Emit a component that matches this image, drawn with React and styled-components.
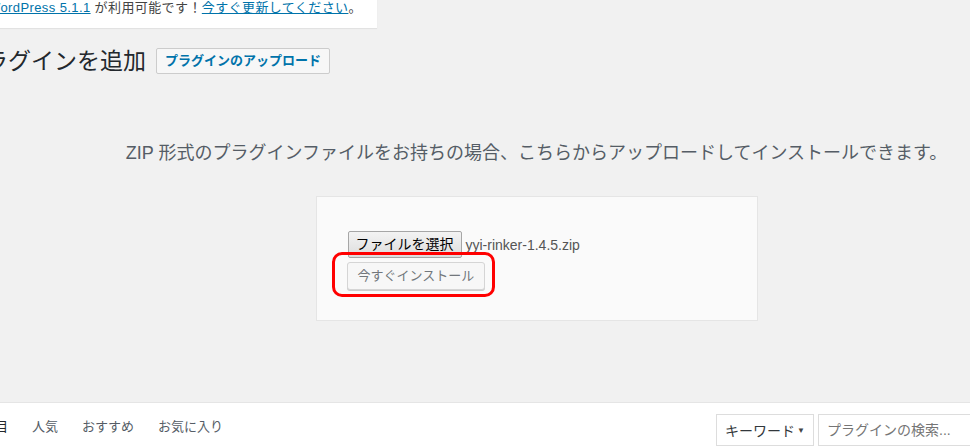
import React from "react";
import styled, { createGlobalStyle } from "styled-components";

const GlobalStyle = createGlobalStyle`
  html, body {
    margin: 0;
    padding: 0;
    background: #f1f1f1;
    overflow: hidden;
  }
  body {
    font-family: "Liberation Sans", "Noto Sans CJK JP", sans-serif;
    color: #444;
  }
`;

const tabs = ["注目", "人気", "おすすめ", "お気に入り"];

const App = () => {
  return (
    <>
      <GlobalStyle />
      <Wrap>
        <Notice>
          <a href="#wp">WordPress 5.1.1</a> が利用可能です！
          <a href="#update">今すぐ更新してください</a>。
        </Notice>

        <TitleRow>
          <Title>プラグインを追加</Title>
          <TitleAction>プラグインのアップロード</TitleAction>
        </TitleRow>

        <UploadSection>
          <Help>
            ZIP 形式のプラグインファイルをお持ちの場合、こちらからアップロードしてインストールできます。
          </Help>
          <UploadForm>
            <FileRow>
              <FileButton>ファイルを選択</FileButton>
              <FileName>yyi-rinker-1.4.5.zip</FileName>
            </FileRow>
            <InstallWrap>
              <InstallButton disabled>今すぐインストール</InstallButton>
              <Highlight />
            </InstallWrap>
          </UploadForm>
        </UploadSection>

        <Filter>
          <Tabs>
            {tabs.map((tab, i) => (
              <Tab key={tab} current={i === 0}>
                {tab}
              </Tab>
            ))}
          </Tabs>
          <SearchForm>
            <TypeSelect>
              キーワード
              <Caret>▼</Caret>
            </TypeSelect>
            <SearchInput placeholder="プラグインの検索..." />
          </SearchForm>
        </Filter>
      </Wrap>
    </>
  );
};

const Wrap = styled.div`
  margin-left: -38px;
  width: 1149px;
`;

const Notice = styled.div`
  box-sizing: border-box;
  width: 408px;
  margin: -12px 0 0 7px;
  padding: 11px 15px;
  background: #fff;
  border-left: 4px solid #ffb900;
  box-shadow: 0 1px 1px rgba(0, 0, 0, 0.06);
  font-size: 13px;
  line-height: 18px;
  letter-spacing: 0.4px;
  color: #444;
  white-space: nowrap;

  a {
    color: #0073aa;
    text-decoration: underline;
  }
`;

const TitleRow = styled.div`
  display: flex;
  align-items: center;
  gap: 10px;
  margin-top: 18px;
  height: 30px;
`;

const Title = styled.h1`
  margin: 0;
  font-size: 23px;
  font-weight: 400;
  line-height: 30px;
  color: #23282d;
  white-space: nowrap;
`;

const TitleAction = styled.button`
  height: 26px;
  padding: 0 8px;
  background: #f7f7f7;
  border: 1px solid #ccc;
  border-radius: 2px;
  color: #0073aa;
  font-family: "Liberation Sans", "Noto Sans CJK JP", sans-serif;
  font-size: 13px;
  font-weight: 700;
  line-height: 24px;
  white-space: nowrap;
`;

const UploadSection = styled.div`
  text-align: center;
  padding-top: 64px;
`;

const Help = styled.p`
  margin: 0;
  font-size: 18px;
  line-height: 26px;
  color: #555d66;
  white-space: nowrap;
`;

const UploadForm = styled.div`
  display: inline-block;
  box-sizing: border-box;
  width: 442px;
  margin-top: 30px;
  padding: 30px;
  background: #fafafa;
  border: 1px solid #e5e5e5;
  text-align: left;
`;

const FileRow = styled.div`
  display: flex;
  align-items: center;
  gap: 4px;
  margin: 4px 0 0 1px;
  height: 27px;
`;

const FileButton = styled.button`
  height: 27px;
  padding: 0 7px;
  background: linear-gradient(#f3f3f3, #dddddd);
  border: 1px solid #a6a6a6;
  border-radius: 2px;
  color: #000;
  font-family: "Liberation Sans", "Noto Sans CJK JP", sans-serif;
  font-size: 14px;
  line-height: 25px;
  white-space: nowrap;
`;

const FileName = styled.span`
  font-size: 14px;
  color: #555;
`;

const InstallWrap = styled.div`
  position: relative;
  display: inline-block;
  margin-top: 4px;
`;

const InstallButton = styled.button`
  display: block;
  height: 28px;
  padding: 0 10px;
  background: #f7f7f7;
  border: 1px solid #d5d5d5;
  border-radius: 3px;
  box-shadow: 0 1px 0 #ccc;
  color: #72777c;
  font-family: "Liberation Sans", "Noto Sans CJK JP", sans-serif;
  font-size: 13px;
  line-height: 26px;
  white-space: nowrap;
`;

const Highlight = styled.span`
  position: absolute;
  left: -15px;
  right: -10px;
  top: -10px;
  bottom: -7px;
  border: 3px solid #ff0000;
  border-radius: 10px;
  pointer-events: none;
`;

const Filter = styled.div`
  display: flex;
  justify-content: space-between;
  align-items: flex-start;
  margin-top: 81px;
  padding: 0 12px 0 7px;
  height: 60px;
  background: #fff;
  border: 1px solid #e5e5e5;
  box-shadow: 0 1px 1px rgba(0, 0, 0, 0.04);
`;

const Tabs = styled.ul`
  display: flex;
  margin: 0;
  padding: 0;
  list-style: none;
`;

const Tab = styled.li`
  margin: 0 12px;
  padding: 15px 0;
  font-size: 13px;
  line-height: 18px;
  color: ${({ current }) => (current ? "#23282d" : "#555d66")};
  white-space: nowrap;
`;

const SearchForm = styled.div`
  display: flex;
  gap: 4px;
  margin: 11px 0;
`;

const TypeSelect = styled.div`
  display: flex;
  align-items: center;
  box-sizing: border-box;
  width: 98px;
  height: 32px;
  padding: 0 8px 0 8px;
  background: #fff;
  border: 1px solid #ddd;
  font-size: 14px;
  color: #32373c;
  white-space: nowrap;
`;

const Caret = styled.span`
  margin-left: auto;
  font-size: 8px;
  color: #444;
`;

const SearchInput = styled.input`
  box-sizing: border-box;
  width: 280px;
  height: 32px;
  padding: 0 8px;
  background: #fff;
  border: 1px solid #ddd;
  font-family: "Liberation Sans", "Noto Sans CJK JP", sans-serif;
  font-size: 14px;
  outline: none;

  ::placeholder {
    color: #72777c;
  }
`;

export default App;
